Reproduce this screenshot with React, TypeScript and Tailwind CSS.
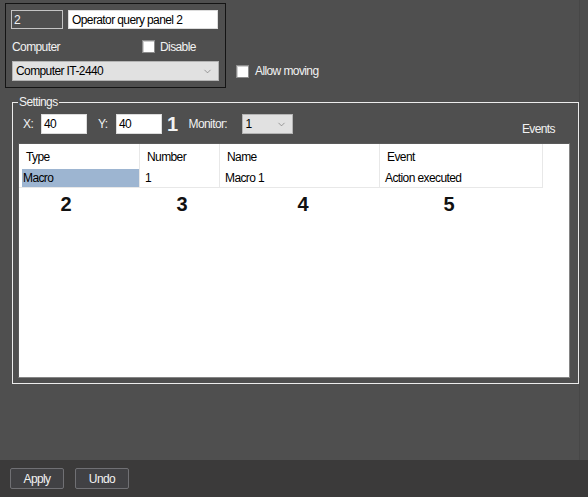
import { ChevronDown } from "lucide-react";

function CheckBox() {
  return (
    <span className="inline-block h-[13px] w-[13px] shrink-0 border border-[#8c8c8c] bg-white shadow-[inset_1px_1px_0_#d0d0d0]" />
  );
}

function Select({ value, className }: { value: string; className: string }) {
  return (
    <div
      className={`flex items-center justify-between border border-[#b4b4b4] bg-[#e1e1e1] pl-[3px] pr-[5px] text-black ${className}`}
    >
      <span>{value}</span>
      <ChevronDown size={11} strokeWidth={1.3} className="text-[#666]" />
    </div>
  );
}

const columns = [
  { title: "Type", value: "Macro", w: "w-[121px]", selected: true },
  { title: "Number", value: "1", w: "w-[80px]" },
  { title: "Name", value: "Macro 1", w: "w-[160px]" },
  { title: "Event", value: "Action executed", w: "w-[163px]" },
];

const callouts = [
  { n: "2", x: "left-[23px]" },
  { n: "3", x: "left-[139px]" },
  { n: "4", x: "left-[260px]" },
  { n: "5", x: "left-[406px]" },
];

export default function App() {
  return (
    <div className="flex h-[497px] w-[588px] flex-col bg-[#4f4f4f] font-['Liberation_Sans',Arial,sans-serif] text-[12px] leading-[14px] tracking-[-0.6px] text-[#f2f2f2]">
      <div className="flex h-[460px]">
        <div className="w-[580px] border-r border-[#474747]">
          {/* top block */}
          <div className="flex items-start">
            <div className="ml-[5px] mt-[3px] flex h-[85px] w-[221px] flex-col border border-[#141414]">
              <div className="ml-[5px] mt-[6px] flex gap-[5px]">
                <div className="flex h-[19px] w-[52px] items-center border border-[#c4c4c4] pl-[2px]">2</div>
                <div className="flex h-[19px] w-[150px] items-center border border-[#dcdcdc] bg-white pl-[3px] text-black">
                  Operator query panel 2
                </div>
              </div>
              <div className="ml-[6px] mt-[11px] flex h-[13px] items-center">
                <span className="w-[130px]">Computer</span>
                <CheckBox />
                <span className="ml-[5px]">Disable</span>
              </div>
              <Select value="Computer IT-2440" className="ml-[6px] mt-[8px] h-[20px] w-[207px]" />
            </div>
            <div className="ml-[10px] mt-[61px] flex h-[20px] items-center">
              <CheckBox />
              <span className="ml-[6px]">Allow moving</span>
            </div>
          </div>

          {/* settings group */}
          <fieldset className="ml-[12px] mt-[7px] w-[567px] border border-[#ececec] pb-[5px]">
            <legend className="ml-[5px] px-[1px]">Settings</legend>
            <div className="mt-[5px] flex h-[20px] items-center">
              <span className="ml-[10px] w-[18px]">X:</span>
              <div className="flex h-[20px] w-[46px] items-center border border-[#dcdcdc] bg-white pl-[2px] text-black">40</div>
              <span className="ml-[11px] w-[18px]">Y:</span>
              <div className="flex h-[20px] w-[46px] items-center border border-[#dcdcdc] bg-white pl-[2px] text-black">40</div>
              <span className="ml-[5px] text-[20px] font-bold">1</span>
              <span className="ml-[11px] w-[53px]">Monitor:</span>
              <Select value="1" className="h-[20px] w-[51px]" />
              <span className="ml-auto mr-[23px] mt-[9px]">Events</span>
            </div>

            <div className="relative ml-[5px] mt-[9px] h-[235px] w-[552px] border border-[#5a5a5a] border-b-[#858585] border-r-[#858585] bg-white text-black">
              <div className="flex">
                {columns.map((c) => (
                  <div key={c.title} className={`flex flex-col border-r border-[#e8e8e8] ${c.w}`}>
                    <div className="flex h-[25px] items-center pl-[7px]">{c.title}</div>
                    <div className="h-[19px] border-b border-[#e8e8e8] pl-[3px]">
                      <div
                        className={`flex h-[18px] items-center ${c.selected ? "bg-[#9db5d1] pl-[1px]" : "pl-[2px]"}`}
                      >
                        {c.value}
                      </div>
                    </div>
                  </div>
                ))}
              </div>
              {callouts.map((c) => (
                <span
                  key={c.n}
                  className={`absolute top-[50px] w-[48px] text-center text-[20px] font-bold leading-[20px] tracking-normal text-[#111] ${c.x}`}
                >
                  {c.n}
                </span>
              ))}
            </div>
          </fieldset>
        </div>
        <div className="flex-1 bg-[#4c4c4c]" />
      </div>

      {/* bottom bar */}
      <div className="flex h-[37px] items-start gap-[11px] bg-[#3b3a3a] pl-[10px] pt-[8px]">
        <button className="flex h-[21px] w-[54px] items-center justify-center rounded-[2px] border border-[#707074] bg-[#414144] text-[#f2f2f2]">
          Apply
        </button>
        <button className="flex h-[21px] w-[54px] items-center justify-center rounded-[2px] border border-[#707074] bg-[#414144] text-[#f2f2f2]">
          Undo
        </button>
      </div>
    </div>
  );
}
